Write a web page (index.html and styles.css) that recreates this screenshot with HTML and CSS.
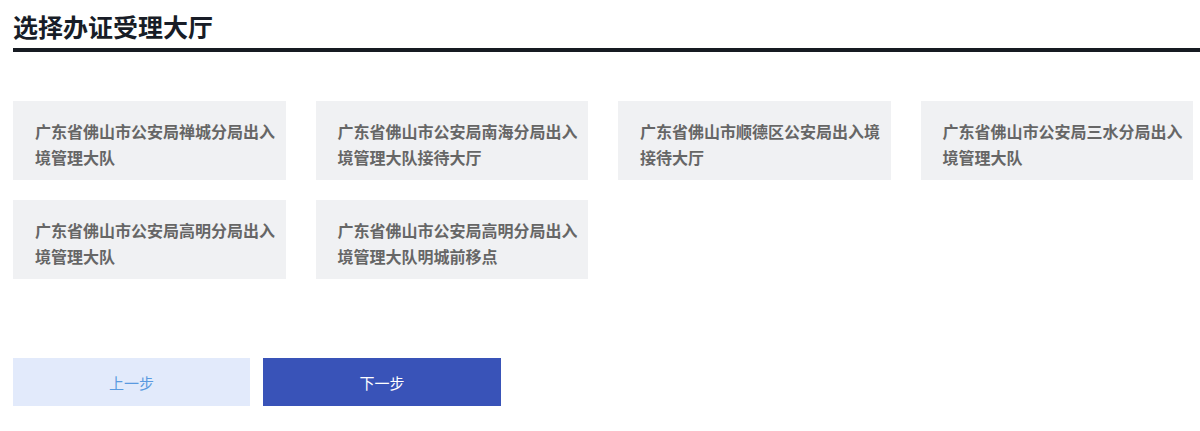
FILE: index.html
```html
<!DOCTYPE html>
<html lang="zh-CN">
<head>
    <meta charset="UTF-8">
    <meta name="viewport" content="width=device-width, initial-scale=1.0">
    <title>选择办证受理大厅</title>
    <link rel="stylesheet" href="styles.css">
</head>
<body>

<div class="page">
    <h2 class="page-title">选择办证受理大厅</h2>

    <div class="hall-list">
        <div class="hall-item">广东省佛山市公安局禅城分局出入境管理大队</div>
        <div class="hall-item">广东省佛山市公安局南海分局出入境管理大队接待大厅</div>
        <div class="hall-item">广东省佛山市顺德区公安局出入境接待大厅</div>
        <div class="hall-item">广东省佛山市公安局三水分局出入境管理大队</div>
        <div class="hall-item">广东省佛山市公安局高明分局出入境管理大队</div>
        <div class="hall-item">广东省佛山市公安局高明分局出入境管理大队明城前移点</div>
    </div>

    <div class="step-buttons">
        <button type="button" class="btn btn-prev">上一步</button>
        <button type="button" class="btn btn-next">下一步</button>
    </div>
</div>

</body>
</html>
```

FILE: styles.css
```css
/* page */
body {
    margin: 0;
    background-color: #fff;
    font-family: "Noto Sans CJK SC", "Noto Sans", sans-serif;
}
.page {
    padding: 0 7px 0 13px;
}
/* title */
.page-title {
    margin: 0 -7px 0 0;
    padding: 12px 0 7px;
    font-size: 25px;
    line-height: 29px;
    font-weight: bold;
    color: #181d27;
    border-bottom: 4px solid #161b22;
}
/* hall cards */
.hall-list {
    display: grid;
    grid-template-columns: repeat(4, 1fr);
    column-gap: 30px;
    row-gap: 20px;
    margin-top: 49px;
}
.hall-item {
    height: 79px;
    box-sizing: border-box;
    padding: 17px 10px 0 22px;
    background-color: #f0f1f3;
    color: #666;
    font-size: 16px;
    font-weight: bold;
    line-height: 26px;
    cursor: pointer;
}
/* buttons */
.step-buttons {
    display: flex;
    gap: 13px;
    margin-top: 79px;
}
.btn {
    width: 237px;
    height: 48px;
    border: none;
    font-family: inherit;
    font-size: 15px;
    cursor: pointer;
}
.btn-prev {
    background-color: #e2eafb;
    color: #5a9ae0;
}
.btn-next {
    width: 238px;
    background-color: #3953b8;
    color: #fff;
}
```
